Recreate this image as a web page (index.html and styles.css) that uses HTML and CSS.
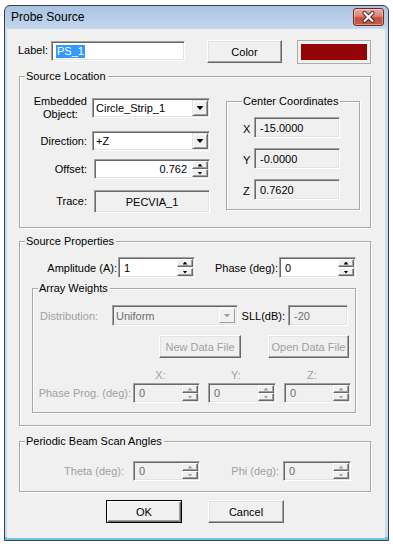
FILE: index.html
```html
<!DOCTYPE html>
<html>
<head>
<meta charset="utf-8">
<title>Probe Source</title>
<link rel="stylesheet" href="styles.css">
</head>
<body>
<div class="window">
  <div class="titlebar">
    <span class="title">Probe Source</span>
    <span class="close">
      <svg width="29" height="16" viewBox="0 0 29 16">
        <path d="M10.5 4 L18.5 12 M18.5 4 L10.5 12" stroke="#5b2720" stroke-width="4.2" stroke-linecap="round"/>
        <path d="M10.5 4 L18.5 12 M18.5 4 L10.5 12" stroke="#ffffff" stroke-width="2.2" stroke-linecap="round"/>
      </svg>
    </span>
  </div>
  <div class="client">
    <div class="top-row">
      <div class="lbl-label">Label:</div>
      <div class="edit label-edit"><span class="sel">PS_1</span></div>
      <div class="btn color-btn">Color</div>
      <div class="swatch"><div class="swatch-fill"></div></div>
    </div>

    <div class="group loc">
      <div class="gtitle">Source Location</div>
      <div class="loc-body">
        <div class="loc-left">
          <div class="frow r-embed">
            <div class="flabel"><span class="two">Embedded<br>Object:</span></div>
            <div class="combo loc-combo"><span class="ctext">Circle_Strip_1</span><span class="dropbtn"><i class="tri-down"></i></span></div>
          </div>
          <div class="frow r-dir">
            <div class="flabel">Direction:</div>
            <div class="combo loc-combo"><span class="ctext">+Z</span><span class="dropbtn"><i class="tri-down"></i></span></div>
          </div>
          <div class="frow r-off">
            <div class="flabel">Offset:</div>
            <div class="edit spin loc-edit"><span class="val right">0.762</span><span class="spinbtns"><span class="sb"><i class="tri-up-s"></i></span><span class="sb"><i class="tri-dn-s"></i></span></span></div>
          </div>
          <div class="frow r-trace">
            <div class="flabel">Trace:</div>
            <div class="edit ro loc-edit trace">PECVIA_1</div>
          </div>
        </div>
        <div class="group center">
          <div class="gtitle">Center Coordinates</div>
          <div class="crow first"><span class="clabel">X</span><div class="edit ro cbox">-15.0000</div></div>
          <div class="crow"><span class="clabel">Y</span><div class="edit ro cbox">-0.0000</div></div>
          <div class="crow"><span class="clabel">Z</span><div class="edit ro cbox">0.7620</div></div>
        </div>
      </div>
    </div>

    <div class="group props">
      <div class="gtitle">Source Properties</div>
      <div class="amp-row">
        <div class="amp-label">Amplitude (A):</div>
        <div class="edit spin w77"><span class="val">1</span><span class="spinbtns"><span class="sb"><i class="tri-up-s"></i></span><span class="sb"><i class="tri-dn-s"></i></span></span></div>
        <div class="phase-label">Phase (deg):</div>
        <div class="edit spin w77"><span class="val">0</span><span class="spinbtns"><span class="sb"><i class="tri-up-s"></i></span><span class="sb"><i class="tri-dn-s"></i></span></span></div>
      </div>

      <div class="group aw">
        <div class="gtitle">Array Weights</div>
        <div class="dist-row">
          <div class="dist-label dis">Distribution:</div>
          <div class="combo dcombo disabled"><span class="ctext">Uniform</span><span class="dropbtn flat"><i class="tri-down gray"></i></span></div>
          <div class="sll-label">SLL(dB):</div>
          <div class="edit ro sll">-20</div>
        </div>
        <div class="file-row">
          <div class="btn dbtn new-btn">New Data File</div>
          <div class="btn dbtn open-btn">Open Data File</div>
        </div>
        <div class="xyz-row">
          <span class="xyz w67">X:</span>
          <span class="xyz w68">Y:</span>
          <span class="xyz w68">Z:</span>
        </div>
        <div class="pp-row">
          <div class="pp-label dis">Phase Prog. (deg):</div>
          <div class="edit spin ro w67"><span class="val dval">0</span><span class="spinbtns"><span class="sb"><i class="tri-up-s g"></i></span><span class="sb"><i class="tri-dn-s g"></i></span></span></div>
          <div class="edit spin ro w68 ml8"><span class="val dval">0</span><span class="spinbtns"><span class="sb"><i class="tri-up-s g"></i></span><span class="sb"><i class="tri-dn-s g"></i></span></span></div>
          <div class="edit spin ro w67 ml8"><span class="val dval">0</span><span class="spinbtns"><span class="sb"><i class="tri-up-s g"></i></span><span class="sb"><i class="tri-dn-s g"></i></span></span></div>
        </div>
      </div>
    </div>

    <div class="group periodic">
      <div class="gtitle">Periodic Beam Scan Angles</div>
      <div class="scan-row">
        <div class="theta-label dis">Theta (deg):</div>
        <div class="edit spin ro w67 h20"><span class="val dval">0</span><span class="spinbtns"><span class="sb"><i class="tri-up-s g"></i></span><span class="sb"><i class="tri-dn-s g"></i></span></span></div>
        <div class="phi-label dis">Phi (deg):</div>
        <div class="edit spin ro w68 h20"><span class="val dval">0</span><span class="spinbtns"><span class="sb"><i class="tri-up-s g"></i></span><span class="sb"><i class="tri-dn-s g"></i></span></span></div>
      </div>
    </div>

    <div class="btn-row">
      <div class="btn default ok">OK</div>
      <div class="btn cancel">Cancel</div>
    </div>
  </div>
</div>
</body>
</html>
```

FILE: styles.css
```css
* { box-sizing: border-box; }
html, body { margin: 0; padding: 0; background: #ffffff; }
body {
  font-family: "Liberation Sans", Arial, sans-serif;
  font-size: 11px;
  color: #000;
  width: 393px;
  height: 546px;
  overflow: hidden;
}

.window {
  margin: 5px 0 0 4px;
  width: 385px;
  height: 536px;
  border: 1px solid #3a3d42;
  border-radius: 6px 6px 0 0;
  background: linear-gradient(to bottom, #a9c3e2 0px, #c3d7ee 22px, #c9dcf1 23px, #c9dcf1 calc(100% - 3px), #6cc6ea calc(100% - 3px));
  display: flex;
  flex-direction: column;
  overflow: hidden;
}

.titlebar {
  height: 23px;
  display: flex;
  align-items: flex-start;
  justify-content: space-between;
  padding-left: 6px;
}
.title {
  font-size: 12px;
  line-height: 23px;
  color: #000;
}
.close {
  margin: 2px 4px 0 0;
  width: 31px;
  height: 18px;
  border: 1px solid #6e2a22;
  border-radius: 3px;
  background: linear-gradient(to bottom, #e9aca3 0%, #d98276 45%, #c4513f 55%, #c75a47 100%);
  box-shadow: inset 0 0 0 1px rgba(255,255,255,0.35);
  display: flex;
  align-items: center;
  justify-content: center;
}
.close svg { display: block; }

.client {
  margin: 0 3px 0 2px;
  height: 509px;
  background: #f0f0f0;
  display: flex;
  flex-direction: column;
  align-items: flex-start;
}

/* ---------- common controls ---------- */
.edit {
  height: 20px;
  background: #fff;
  border: 1px solid;
  border-color: #a0a0a0 #ffffff #ffffff #a0a0a0;
  box-shadow: inset 1px 1px 0 #696969, inset -1px -1px 0 #e3e3e3;
  display: flex;
  align-items: center;
  padding: 0 3px;
  white-space: nowrap;
}
.edit.ro { background: #f0f0f0; }

.btn {
  background: #f0f0f0;
  border: 1px solid;
  border-color: #ffffff #696969 #696969 #ffffff;
  box-shadow: inset -1px -1px 0 #a0a0a0, inset 1px 1px 0 #e3e3e3;
  display: flex;
  align-items: center;
  justify-content: center;
  height: 23px;
}
.btn.default {
  border: 1px solid #000;
  box-shadow: inset 1px 1px 0 #fff, inset -1px -1px 0 #696969, inset -2px -2px 0 #a0a0a0;
}
.btn.dbtn { color: #a0a0a0; }

.combo {
  height: 20px;
  background: #fff;
  border: 1px solid;
  border-color: #a0a0a0 #ffffff #ffffff #a0a0a0;
  box-shadow: inset 1px 1px 0 #696969, inset -1px -1px 0 #e3e3e3;
  display: flex;
  align-items: stretch;
  padding: 1px;
}
.combo .ctext {
  flex: 1;
  display: flex;
  align-items: center;
  padding-left: 2px;
  white-space: nowrap;
}
.dropbtn {
  width: 16px;
  background: #f0f0f0;
  border: 1px solid;
  border-color: #e3e3e3 #696969 #696969 #e3e3e3;
  box-shadow: inset 1px 1px 0 #fff, inset -1px -1px 0 #a0a0a0;
  display: flex;
  align-items: center;
  justify-content: center;
}
.tri-down {
  display: block;
  width: 7px;
  height: 4px;
  background: #000;
  clip-path: polygon(0 0, 100% 0, 50% 100%);
}
.tri-down.gray { background: #a0a0a0; }
.combo.disabled { background: #f0f0f0; }
.combo.disabled .ctext { color: #6d6d6d; }
.dropbtn.flat {
  border-color: #ffffff #a0a0a0 #a0a0a0 #ffffff;
  box-shadow: none;
  margin: 1px 1px 1px 0;
}

/* spin */
.spin { padding: 1px; align-items: stretch; }
.spin .val {
  flex: 1;
  display: flex;
  align-items: center;
  padding-left: 4px;
}
.spin .val.right { justify-content: flex-end; padding-right: 5px; }
.spin .val.dval { color: #6d6d6d; }
.spinbtns {
  width: 16px;
  display: flex;
  flex-direction: column;
  justify-content: space-between;
}
.sb {
  height: 8px;
  background: #f0f0f0;
  border: 1px solid;
  border-color: #ffffff #696969 #696969 #ffffff;
  box-shadow: inset -1px -1px 0 #a0a0a0;
  display: flex;
  align-items: center;
  justify-content: center;
}
.tri-up-s, .tri-dn-s {
  display: block;
  width: 5px;
  height: 3px;
  background: #000;
}
.tri-up-s { clip-path: polygon(50% 0, 100% 100%, 0 100%); }
.tri-dn-s { clip-path: polygon(0 0, 100% 0, 50% 100%); }
.tri-up-s.g, .tri-dn-s.g { background: #a0a0a0; }

.dis { color: #a0a0a0; }

/* group box */
.group {
  border: 1px solid #a8a8a8;
  box-shadow: 1px 1px 0 #ffffff, inset 1px 1px 0 #ffffff;
}
.gtitle {
  width: fit-content;
  margin: -7px 0 0 5px;
  padding: 0 2px 0 1px;
  line-height: 13px;
  height: 13px;
  background: #f0f0f0;
  white-space: nowrap;
}

/* ---------- top row ---------- */
.top-row {
  margin-top: 11px;
  display: flex;
  align-items: flex-start;
  height: 24px;
}
.lbl-label {
  width: 44px;
  padding-left: 11px;
  height: 24px;
  line-height: 21px;
}
.label-edit {
  width: 134px;
  margin-top: 1px;
  padding-left: 4px;
}
.sel {
  background: #3399ff;
  color: #fff;
  line-height: 13px;
  padding: 0 1px;
}
.color-btn {
  margin-left: 22px;
  width: 75px;
}
.swatch {
  margin-left: 15px;
  width: 74px;
  height: 24px;
  border: 1px solid #adadad;
  padding: 3px;
  background: #f0f0f0;
}
.swatch-fill {
  width: 100%;
  height: 100%;
  background: #950404;
}

/* ---------- source location ---------- */
.loc {
  margin: 12px 0 0 12px;
  width: 352px;
  height: 152px;
}
.loc-body {
  display: flex;
  align-items: flex-start;
  padding-top: 12px;
}
.loc-left {
  width: 190px;
  display: flex;
  flex-direction: column;
}
.frow {
  display: flex;
  align-items: center;
}
.flabel {
  width: 67px;
  text-align: right;
  line-height: 13px;
  white-space: nowrap;
}
.two {
  display: inline-block;
  text-align: center;
}
.r-embed { height: 26px; }
.r-dir { height: 20px; margin-top: 10px; }
.r-off { height: 20px; margin-top: 8px; }
.r-trace { height: 23px; margin-top: 11px; }
.loc-combo { margin-left: 5px; width: 118px; }
.loc-edit { margin-left: 7px; width: 116px; }
.trace { height: 23px; justify-content: center; }

.center {
  margin: 6px 0 0 16px;
  width: 134px;
  height: 109px;
}
.center .gtitle { margin-left: 15px; }
.crow {
  display: flex;
  align-items: center;
  margin-top: 10px;
  padding-left: 16px;
}
.crow.first { margin-top: 9px; }
.clabel {
  width: 11px;
  padding-top: 3px;
}
.cbox {
  width: 86px;
  height: 21px;
  padding-left: 5px;
}

/* ---------- source properties ---------- */
.props {
  margin: 13px 0 0 12px;
  width: 352px;
  height: 185px;
}
.amp-row {
  margin-top: 9px;
  display: flex;
  align-items: center;
  height: 21px;
}
.amp-label { width: 98px; text-align: right; padding-right: 1px; }
.phase-label { width: 84px; text-align: right; padding-right: 1px; }
.w77 { width: 77px; height: 21px; }
.w67 { width: 67px; }
.w68 { width: 68px; }
.ml8 { margin-left: 8px; }
.h20 { height: 20px; }

.aw {
  margin: 10px 0 0 12px;
  width: 324px;
  height: 125px;
}
.dist-row {
  margin-top: 10px;
  display: flex;
  align-items: center;
  height: 21px;
}
.dist-label { width: 79px; padding-left: 7px; }
.dcombo { width: 126px; height: 21px; }
.sll-label { width: 50px; text-align: right; padding-right: 3px; }
.sll { width: 60px; height: 21px; color: #6d6d6d; padding-left: 5px; }

.file-row {
  margin: 9px 0 0 126px;
  display: flex;
}
.new-btn { width: 82px; }
.open-btn { width: 81px; margin-left: 27px; }

.xyz-row {
  margin: 11px 0 0 100px;
  display: flex;
  height: 13px;
  line-height: 13px;
}
.xyz {
  color: #a0a0a0;
  text-align: center;
  padding-right: 12px;
}
.xyz + .xyz { margin-left: 8px; }

.pp-row {
  margin-top: 1px;
  display: flex;
  align-items: center;
  height: 20px;
}
.pp-label { width: 100px; text-align: right; padding-right: 2px; white-space: nowrap; }

/* ---------- periodic ---------- */
.periodic {
  margin: 15px 0 0 12px;
  width: 352px;
  height: 51px;
}
.scan-row {
  margin-top: 13px;
  display: flex;
  align-items: center;
  height: 20px;
}
.theta-label { width: 113px; text-align: right; padding-right: 9px; }
.phi-label { width: 83px; text-align: right; padding-right: 4px; }

/* ---------- buttons ---------- */
.btn-row {
  margin: 8px 0 0 99px;
  display: flex;
}
.ok { width: 76px; }
.cancel { width: 76px; margin-left: 26px; }
```
